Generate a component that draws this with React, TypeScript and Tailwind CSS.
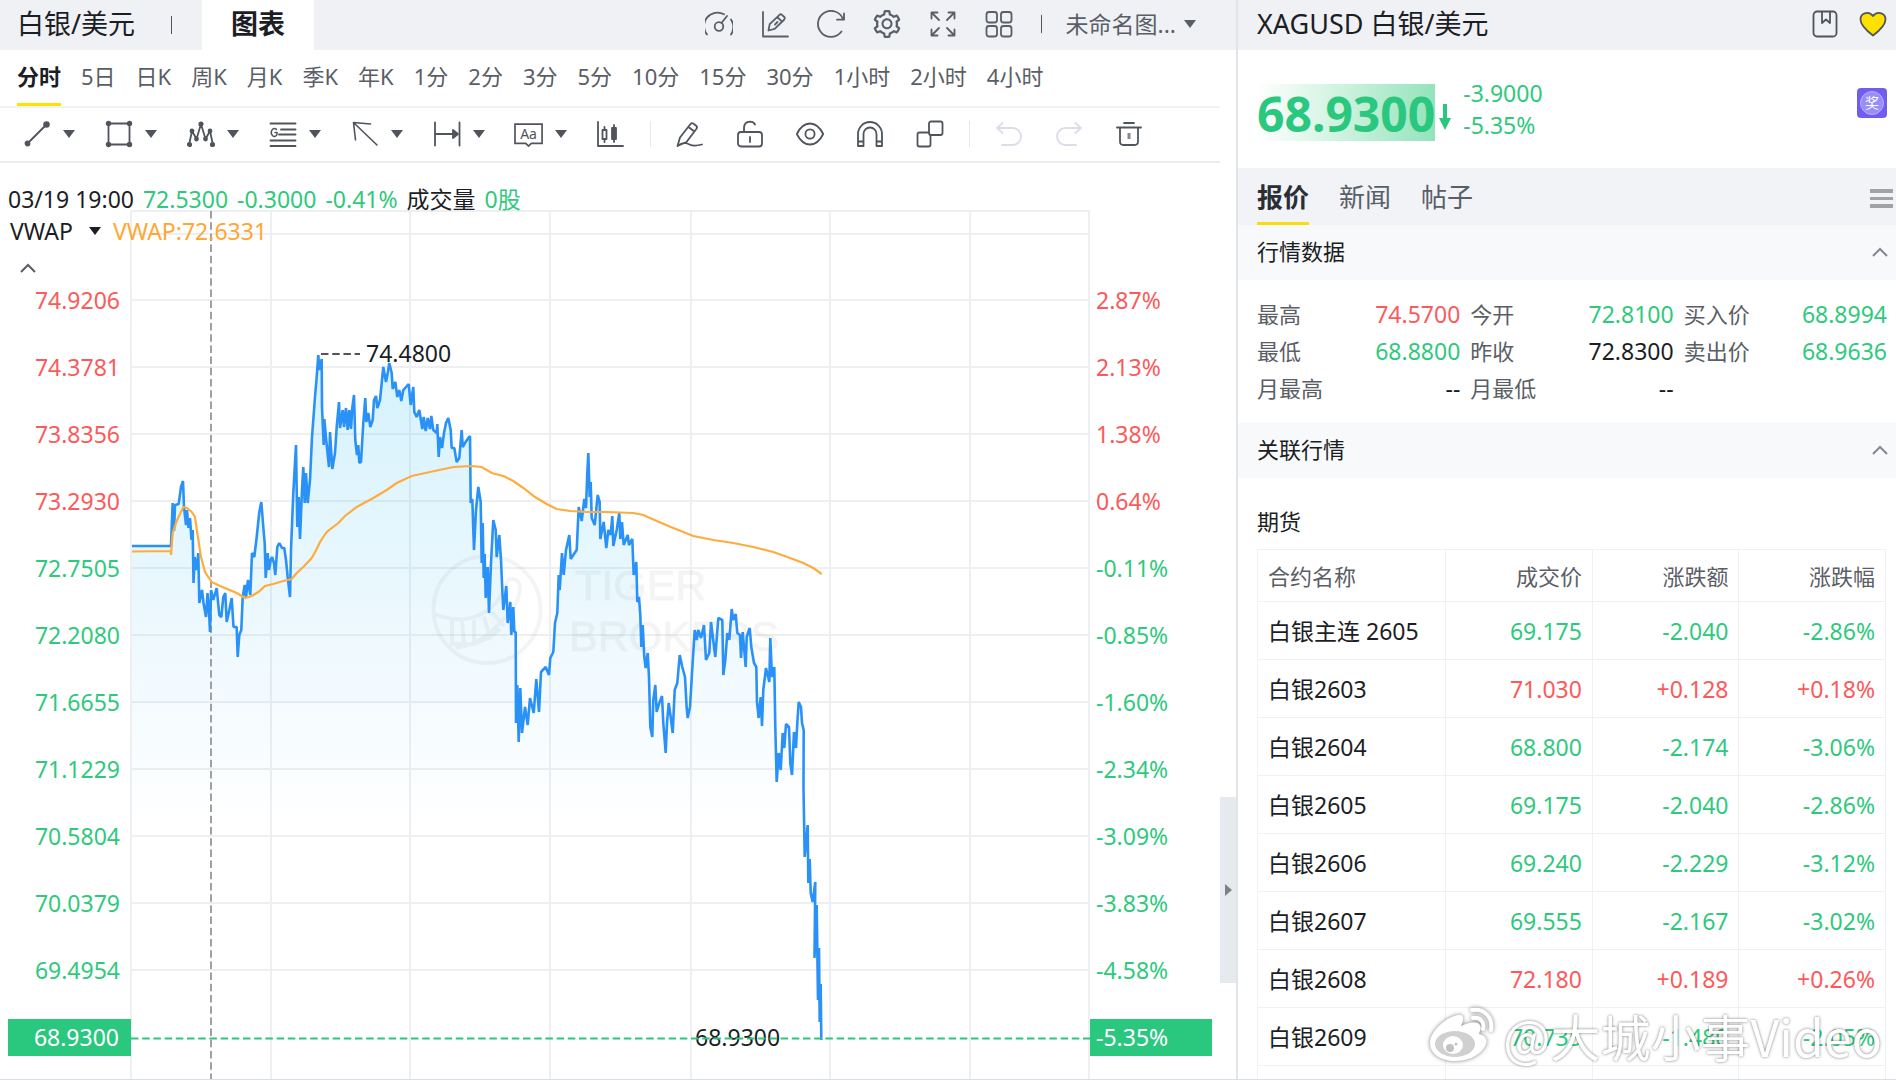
import type { ReactNode } from "react";
import { AiOutlineSetting } from "react-icons/ai";

const UP = "text-[#fc5a5a]";
const DOWN = "text-[#2fc97d]";

const periods = ["分时", "5日", "日K", "周K", "月K", "季K", "年K", "1分", "2分", "3分", "5分", "10分", "15分", "30分", "1小时", "2小时", "4小时"];

const axis = [
    { y: 300, price: "74.9206", pct: "2.87%", up: true },
    { y: 367, price: "74.3781", pct: "2.13%", up: true },
    { y: 434, price: "73.8356", pct: "1.38%", up: true },
    { y: 501, price: "73.2930", pct: "0.64%", up: true },
    { y: 568, price: "72.7505", pct: "-0.11%", up: false },
    { y: 635, price: "72.2080", pct: "-0.85%", up: false },
    { y: 702, price: "71.6655", pct: "-1.60%", up: false },
    { y: 769, price: "71.1229", pct: "-2.34%", up: false },
    { y: 836, price: "70.5804", pct: "-3.09%", up: false },
    { y: 903, price: "70.0379", pct: "-3.83%", up: false },
    { y: 970, price: "69.4954", pct: "-4.58%", up: false },
];

const quotes = [
    { label: "最高", value: "74.5700", color: UP },
    { label: "今开", value: "72.8100", color: DOWN },
    { label: "买入价", value: "68.8994", color: DOWN },
    { label: "最低", value: "68.8800", color: DOWN },
    { label: "昨收", value: "72.8300", color: "text-[#1b1e24]" },
    { label: "卖出价", value: "68.9636", color: DOWN },
    { label: "月最高", value: "--", color: "text-[#1b1e24]" },
    { label: "月最低", value: "--", color: "text-[#1b1e24]" },
];

const futures = [
    { name: "白银主连 2605", price: "69.175", change: "-2.040", pct: "-2.86%" },
    { name: "白银2603", price: "71.030", change: "+0.128", pct: "+0.18%" },
    { name: "白银2604", price: "68.800", change: "-2.174", pct: "-3.06%" },
    { name: "白银2605", price: "69.175", change: "-2.040", pct: "-2.86%" },
    { name: "白银2606", price: "69.240", change: "-2.229", pct: "-3.12%" },
    { name: "白银2607", price: "69.555", change: "-2.167", pct: "-3.02%" },
    { name: "白银2608", price: "72.180", change: "+0.189", pct: "+0.26%" },
    { name: "白银2609", price: "70.735", change: "-1.480", pct: "-2.05%" },
];

const priceLine =
    "132,546 171,546 171.7,527 172.7,503 174,531 175,505 178.7,504 181,487 183,481 184,507 186,525 187,510 188.5,528 190,518 191.5,540 192.7,530 193.5,583 194.7,557 196.7,570 198.3,553 199.3,603 202,590 203.5,603 206,617 207.5,593 209.3,617 210,632 211,590 213.3,600 216.7,588 219.3,615 221.3,617 223.3,597 225.3,593 226.7,622 229.3,610 231.7,598 233.5,627 236.7,627 237.7,657 239.3,635 241.3,630 242.7,597 244.7,585 246,597 248,580 250.3,595 252,553 254.3,557 256.7,537 259.3,512 261.3,502 263.3,527 264.7,543 265.7,578 267.7,553 269,570 270.7,560 272,557 274,563 275.3,575 277.3,547 279.3,543 282,548 284.3,548 286,560 287.7,577 290,597 291,550 293.3,493 296,445 297.3,527 298.7,497 300,539 302,490 303.3,467 304.7,503 306,473 307.7,503 310,480 312,437 315,397 316.7,377 318.3,355 319.3,370 321.7,359 322,407 323.7,445 324.3,419 326.7,445 329,467 330,432 332.3,469 335,453 336.7,427 339,402 340,428 342.7,410 344,427 346,408 347.7,430 349.3,410 351,429 352.3,408 354,395 355.3,440 357,455 358.3,445 359.3,463 361,462 363.3,423 365.3,398 366.3,422 368.3,413 370.3,427 372.7,420 374,400 376,396 377.3,408 380,400 382,380 383.3,367 386,382 387.7,373 389.3,363 391.7,373 392.7,389 395.3,382 397.3,397 399.3,390 401.3,401 403.3,390 406,387 408.7,384 410.7,405 413.3,387 414.3,412 416.7,417 419.3,410 422.3,429 423.7,417 425.7,431 427.7,418 430,429 431.3,416 433.3,430 436.7,433 437.3,424 438.7,457 440,437 442,448 444,433 446,423 448.3,418 450.7,430 451.7,448 454.3,448 456.7,462 459.3,458 461.7,430 462.7,447 465,443 468.3,438 470,436 470.7,503 472.3,499 474,550 476,510 478.3,487 480.7,502 481.7,563 482.7,523 483.7,578 484.7,554 485.7,598 487.7,567 489,613 491,563 493.3,520 495.7,530 496.7,557 499.3,535 501,560 502.3,590 503.3,610 506.3,586 507.7,623 510.3,602 511.3,635 513.3,607 514.3,632 515.7,632 516,723 517.3,685 518.7,742 520.3,688 522,733 525,707 527.7,725 530,698 533.7,713 536.3,679 539,712 541,672 545.7,667 549,675 550.3,658 553.3,652 555,623 557.3,613 558.7,575 559.7,590 562,553 563.7,575 566,550 569.3,535 570.7,559 573.3,555 576.7,550 578.7,507 581.7,521 584.3,499 586,508 587.3,473 588.3,453 589.7,497 590.7,482 591.7,518 594.7,525 597.7,495 599.7,502 600.3,539 603.7,522 606.3,548 608.3,530 610.7,535 612.3,516 613.3,546 616.7,530 619.3,513 620.3,539 622,522 623.7,545 627.7,535 629,545 632.3,539 633.7,575 636.3,562 637.3,602 639,597 640.3,615 641.3,647 642.7,625 644.3,657 645.7,668 647.7,653 649,677 650.3,727 652.3,737 653.3,700 655.3,685 656.7,712 659.3,703 662,696 663.3,723 665.7,753 667,723 668.7,703 670.7,717 672.7,733 674.7,690 677.3,683 679.7,655 682.3,667 685,677 686.7,708 687.7,718 690,707 692,673 694.7,630 696.7,640 698.3,630 701,638 704,625 706,660 709.3,653 711,622 715.3,657 718.3,618 722.3,620 723.3,675 725.3,660 727.3,633 729.3,640 731.7,609 733.3,620 735.7,614 737.3,633 740,635 741,658 742.7,632 745.7,667 746.7,637 749.7,628 751.3,647 754,663 756.3,667 757,702 758.7,718 760.7,697 762,726 763.3,690 766,668 769.3,682 770.3,638 772,677 774.3,667 775.3,727 776.7,782 778.7,753 780.7,770 782.7,733 784.3,748 786,724 789,727 790.3,763 792,775 794,732 796,748 797.3,723 798.7,702 801,707 802,723 803.7,730 803.5,788 804.7,857 807.7,825 808.3,883 809.7,859 810.7,893 812.7,902 815.3,882 814.5,958 816.7,905 818,1000 819,948 819.7,1022 820.7,984 821.3,1040";

const vwapLine =
    "132,551.5 171,551 171,555 172.7,533 176.7,521 183.3,507 187,508 191.7,512 195,517 197.3,533 201,557 205,572 211.7,582 220,586 236.7,593 245,598 251.7,596 258.3,592 265,586 273.3,584 283.3,581 291.7,579 296.7,573 303.3,567 311.7,558 316.7,549 320,542 326.7,532 338.3,523 345,516 356.7,507 373.3,498 386.7,490 396.7,483 411.7,476 430,472 453.3,467 471.7,466 481.7,467 491.7,473 503.3,476 513.3,481 523.3,488 535,497 546.7,504 556.7,509 570,511 586.7,512 606.7,512 633.3,513 643.3,515 656.7,521 673.3,528 693.3,536 713.3,540 733.3,543 753.3,547 773.3,552 790,558 803.3,563 813.3,568 821.7,574";

function Icon({ children, className = "" }: { children: ReactNode; className?: string }) {
    return (
        <svg
            viewBox="0 0 28 28"
            className={`size-7 shrink-0 ${className}`}
            fill="none"
            stroke="currentColor"
            strokeWidth="1.8"
            strokeLinecap="round"
            strokeLinejoin="round"
        >
            {children}
        </svg>
    );
}

function Caret() {
    return (
        <svg viewBox="0 0 12 8" className="h-2 w-3 shrink-0" fill="currentColor">
            <path d="M0 0h12L6 8z" />
        </svg>
    );
}

function Chevron() {
    return (
        <svg viewBox="0 0 16 10" className="h-[10px] w-4" fill="none" stroke="currentColor" strokeWidth="2">
            <path d="M1 9l7-7 7 7" />
        </svg>
    );
}

/* Top bar icons, left to right */
const topIcons = [
    {
        name: "仪表",
        icon: (
            <Icon>
                <path d="M2 24.5A13.5 13.5 0 0 1 19 4.2M26 9.5a14 14 0 0 1 0 15M16.5 13l5.5-7" />
                <circle cx="14" cy="16.5" r="4.3" />
            </Icon>
        ),
    },
    {
        name: "画图",
        icon: (
            <Icon>
                <path d="M2 2v24.5h25M7.5 20.5l1.2-6.3L18.5 4.8q1.2-1 2.5 0l2.3 2.2q1.2 1.2 0 2.5l-9.6 9.3zM16.2 7l4.8 4.6M14 14.5l2.5-2.5" />
            </Icon>
        ),
    },
    {
        name: "刷新",
        icon: (
            <Icon>
                <path d="M24.5 21.5A13 13 0 1 1 26 9M27 3.5V9.7h-7" />
            </Icon>
        ),
    },
    { name: "设置", icon: <AiOutlineSetting className="-mx-[2px] size-8" /> },
    {
        name: "全屏",
        icon: (
            <Icon>
                <path d="M10 10L2.5 2.5M2.5 8.5v-6h6M18 10l7.5-7.5M19.5 2.5h6v6M10 18l-7.5 7.5M2.5 19.5v6h6M18 18l7.5 7.5M25.5 19.5v6h-6" />
            </Icon>
        ),
    },
    {
        name: "布局",
        icon: (
            <Icon>
                <rect x="1.5" y="2" width="10.5" height="10.5" rx="2.5" />
                <rect x="16" y="2" width="10.5" height="10.5" rx="2.5" />
                <rect x="1.5" y="16" width="10.5" height="10.5" rx="2.5" />
                <rect x="16" y="16" width="10.5" height="10.5" rx="2.5" />
            </Icon>
        ),
    },
];

const drawTools = [
    {
        name: "线段",
        icon: (
            <Icon>
                <path d="M4 24L24 4" />
                <circle cx="4.5" cy="23.5" r="2" fill="currentColor" />
                <circle cx="23.5" cy="4.5" r="2.4" fill="currentColor" />
            </Icon>
        ),
    },
    {
        name: "矩形",
        icon: (
            <Icon>
                <path d="M3.5 3.5h21v21h-21z" />
                <g fill="currentColor">
                    <circle cx="3.5" cy="3.5" r="1.8" />
                    <circle cx="24.5" cy="3.5" r="1.8" />
                    <circle cx="3.5" cy="24.5" r="1.8" />
                    <circle cx="24.5" cy="24.5" r="1.8" />
                </g>
            </Icon>
        ),
    },
    {
        name: "形态",
        icon: (
            <Icon>
                <path d="M2 25L5 11l4.5 8L14 4l4.5 15L23 11l3 14" />
                <g fill="currentColor">
                    <circle cx="2.5" cy="24.5" r="1.7" />
                    <circle cx="5" cy="11" r="1.5" />
                    <circle cx="9.5" cy="19" r="1.5" />
                    <circle cx="14" cy="4" r="1.7" />
                    <circle cx="18.5" cy="19" r="1.5" />
                    <circle cx="23" cy="11" r="1.5" />
                    <circle cx="25.5" cy="24.5" r="1.7" />
                </g>
            </Icon>
        ),
    },
    {
        name: "江恩",
        icon: (
            <Icon>
                <path d="M1.5 3.5h25M12 9.500h14.5M10 14.5h16.5M1.5 20.5h25M1.5 26h25" />
                <path d="M7.5 9.5a3 4 0 1 0 .5 5v-2H6" strokeWidth="1.5" />
            </Icon>
        ),
    },
    {
        name: "箭头",
        icon: (
            <Icon>
                <path d="M26 25L3 3M4.5 20L2.500 2.500l17 1.500" strokeWidth="1.6" />
            </Icon>
        ),
    },
    {
        name: "测量",
        icon: (
            <Icon>
                <path d="M2 2.5v23M26.5 2.5v23M2 14h22" />
                <path d="M20 10l5 4-5 4z" fill="currentColor" />
            </Icon>
        ),
    },
    {
        name: "文字",
        icon: (
            <svg viewBox="0 0 30 28" className="size-7 shrink-0 overflow-visible" fill="none" stroke="currentColor" strokeWidth="1.8">
                <path d="M0 3.5h29V24H17.5l-3 3-3-3H0z" />
                <text x="14.5" y="19.5" textAnchor="middle" fontSize="15" fill="currentColor" stroke="none">
                    Aa
                </text>
            </svg>
        ),
    },
];

const editTools = [
    {
        name: "画笔",
        icon: (
            <Icon>
                <path d="M1.500 26L4 17.5 14.5 4q1.3-1.5 3-.3l2.7 2q1.5 1.3.3 3L10.5 22zM12.5 7l5.5 4.3M1.5 26c6-5 9-3 12-1.5s7 1.5 12.5 0" />
            </Icon>
        ),
    },
    {
        name: "锁定",
        icon: (
            <Icon>
                <rect x="2" y="12" width="24" height="14.5" rx="3" />
                <path d="M8 12V8q0-6 6-6.3 3.5 0 5 2.8M14 17v5" />
            </Icon>
        ),
    },
    {
        name: "显示",
        icon: (
            <Icon>
                <path d="M.8 14Q6 3.5 14 3.5T27.2 14Q22 24.5 14 24.5T.8 14z" />
                <circle cx="14" cy="14" r="4.6" />
            </Icon>
        ),
    },
    {
        name: "磁铁",
        icon: (
            <Icon>
                <path d="M2 26V14a12 12 0 0 1 24 0v12h-5.5V14a6.5 6.5 0 0 0-13 0v12zM2 21.5h5.5M20.5 21.5H26" />
            </Icon>
        ),
    },
    {
        name: "联动",
        icon: (
            <Icon>
                <rect x="13" y="1.5" width="13.5" height="13.5" rx="2" />
                <path d="M13 12.5H3.5q-2 0-2 2v10q0 2 2 2h9q2 0 2-2V15" />
            </Icon>
        ),
    },
];

const historyTools = [
    {
        name: "撤销",
        icon: (
            <Icon className="text-[#dcdcea]">
                <path d="M7.5 3L2 8l5.5 5M2 8h15.5a8.5 8.5 0 0 1 0 17H7" />
            </Icon>
        ),
    },
    {
        name: "重做",
        icon: (
            <Icon className="text-[#dcdcea]">
                <path d="M20.5 3L26 8l-5.5 5M26 8H10.5a8.5 8.5 0 0 0 0 17H21" />
            </Icon>
        ),
    },
    {
        name: "删除",
        icon: (
            <Icon>
                <path d="M9 3h10M2 7.5h24M5 7.5v14Q5 25 8.500 25h11q3.500 0 3.500-3.500v-14" />
                <path d="M14 13v6" strokeWidth="3" stroke="#85888f" strokeLinecap="butt" />
            </Icon>
        ),
    },
];

function ToolButton({ name, icon }: { name: string; icon: ReactNode }) {
    return (
        <button type="button" aria-label={name} className="shrink-0">
            {icon}
        </button>
    );
}

function PriceChart() {
    return (
        <svg viewBox="0 163 1220 916" className="block w-full text-[23px]">
            <defs>
                <linearGradient id="area" gradientUnits="userSpaceOnUse" x1="0" y1="350" x2="0" y2="825">
                    <stop offset="0" stopColor="#1cbcf2" stopOpacity="0.19" />
                    <stop offset="1" stopColor="#1ca6f2" stopOpacity="0" />
                </linearGradient>
            </defs>

            <g stroke="#eeeff1" strokeWidth="2">
                <path d="M131 211H1089V1079M131 211V1079M131 234H1089" fill="none" />
                {axis.map((a) => (
                    <path key={a.y} d={`M131 ${a.y}H1089`} />
                ))}
                {[271, 410, 550, 691, 830, 970].map((x) => (
                    <path key={x} d={`M${x} 211V1079`} />
                ))}
            </g>

            {/* Broker logo behind the line */}
            <g fill="#1b1e24" opacity="0.045" fontFamily="Liberation Sans, sans-serif" fontSize="43">
                <g fill="none" stroke="#1b1e24" strokeWidth="4">
                    <circle cx="487" cy="609.5" r="53.5" />
                    <path d="M435 614c22 10 44 5 58-8s10-28 20-27 10 18-4 34-28 32-54 35M452 620v24h16M462 620l2 24M474 620v24l14-6M484 617l6 20 10-8M492 612l12 14" />
                </g>
                <g stroke="#1b1e24" strokeWidth="1">
                    <text x="575" y="600">TIGER</text>
                    <text x="569" y="651">BROKERS</text>
                </g>
            </g>

            <polygon points={`${priceLine} 821,1079 132,1079`} fill="url(#area)" />
            <path d="M211 211V1079" stroke="#a0a0a0" strokeWidth="2" strokeDasharray="7.5 3.7" />
            <polyline points={priceLine} fill="none" stroke="#2a91f6" strokeWidth="2.6" strokeLinejoin="bevel" />
            <polyline points={vwapLine} fill="none" stroke="#ffab3d" strokeWidth="2.2" />

            <path d="M321 354H360" stroke="#1b1e24" strokeWidth="1.6" strokeDasharray="7.5 3.7" />
            <text x="366" y="362" fill="#1b1e24">74.4800</text>
            <text x="695" y="1046" fill="#1b1e24">68.9300</text>
            <path d="M131 1038.5H1090" stroke="#2ac77f" strokeWidth="2" strokeDasharray="7.5 3.7" />

            {axis.map((a) => (
                <g key={a.price} fill={a.up ? "#fc5a5a" : "#2fc97d"}>
                    <text x="120" y={a.y + 9} textAnchor="end">{a.price}</text>
                    <text x="1096" y={a.y + 9}>{a.pct}</text>
                </g>
            ))}
            <g fill="#2ac77f">
                <rect x="8" y="1019" width="123" height="37" />
                <rect x="1090" y="1019" width="122" height="37" />
            </g>
            <g fill="#fff">
                <text x="119" y="1046" textAnchor="end">68.9300</text>
                <text x="1096" y="1046">-5.35%</text>
            </g>
        </svg>
    );
}

function SectionTitle({ title }: { title: string }) {
    return (
        <div className="flex h-[55px] items-center justify-between bg-[#f8f9fb] pr-2 pb-[2px] pl-[19px]">
            <h2 className="text-[22px] text-[#1b1e24]">{title}</h2>
            <button type="button" aria-label={`收起${title}`} className="text-[#85888f]">
                <Chevron />
            </button>
        </div>
    );
}

function FuturesTable() {
    return (
        <table className="w-full table-fixed border-collapse text-right text-[23px] leading-8 [&_td]:border [&_td]:border-[#eef1f6] [&_td]:px-[10px] [&_th]:border [&_th]:border-[#eef1f6] [&_th]:px-[10px] [&_th]:font-normal">
            <thead>
                <tr className="h-[52px] text-[22px] text-[#5a5e66]">
                    <th className="w-[30%] text-left">合约名称</th>
                    <th>成交价</th>
                    <th>涨跌额</th>
                    <th>涨跌幅</th>
                </tr>
            </thead>
            <tbody>
                {futures.map((f) => {
                    const color = f.change.startsWith("+") ? UP : DOWN;
                    return (
                        <tr key={f.name} className={`h-[58px] ${color}`}>
                            <td className="text-left text-[#1b1e24]">{f.name}</td>
                            <td>{f.price}</td>
                            <td>{f.change}</td>
                            <td>{f.pct}</td>
                        </tr>
                    );
                })}
                <tr className="h-[58px]">
                    <td />
                    <td />
                    <td />
                    <td />
                </tr>
            </tbody>
        </table>
    );
}

export default function App() {
    return (
        <div className="relative flex h-screen overflow-hidden border-b border-[#dcdde0] bg-white font-['Noto_Sans','Noto_Sans_CJK_SC',sans-serif] text-[22px] text-[#1b1e24]">
            <main className="min-w-0 flex-1">
                <header className="flex h-[50px] items-center bg-[#eff1f5] pr-10 text-[27px]">
                    <a href="#quote" className="pb-[2px] pl-[17px]">白银/美元</a>
                    <span className="ml-9 h-[18px] w-px bg-[#50545c]" />
                    <a href="#chart" className="ml-[30px] flex h-full items-center bg-white px-[29px] pb-[2px] font-bold">图表</a>
                    <div className="ml-auto flex items-center gap-7 pb-[2px] text-[#5a5e66]">
                        {topIcons.map((t) => (
                            <ToolButton key={t.name} name={t.name} icon={t.icon} />
                        ))}
                        <span className="h-[18px] w-px bg-[#50545c]" />
                        <button type="button" className="-ml-1 flex items-center gap-2 text-[23px]">
                            未命名图...
                            <Caret />
                        </button>
                    </div>
                </header>

                <div className="flex">
                    <div className="min-w-0 flex-1">
                        <nav className="flex h-[58px] gap-5 border-b-2 border-[#f1f2f4] pl-[17px] text-[#5a5e66]">
                            {periods.map((p, i) => (
                                <button
                                    key={p}
                                    type="button"
                                    className={i === 0 ? "shrink-0 border-b-3 border-[#ffe100] font-bold text-[#1b1e24]" : "shrink-0 border-b-3 border-transparent"}
                                >
                                    {p}
                                </button>
                            ))}
                        </nav>

                        <div className="flex h-[55px] items-center border-b-2 border-[#ebecee] pb-[2px] pl-[23px] text-[#50545c]">
                            <div className="flex gap-[30px]">
                                {drawTools.map((t) => (
                                    <button key={t.name} type="button" aria-label={t.name} className="flex shrink-0 items-center gap-3">
                                        {t.icon}
                                        <Caret />
                                    </button>
                                ))}
                                <button type="button" aria-label="K线">
                                    <Icon>
                                        <path d="M1 2v24h25M7.5 7v3M7.5 19v3M17 5v17" />
                                        <rect x="5.5" y="10" width="4" height="9" />
                                        <rect x="15" y="8" width="4" height="11" fill="currentColor" />
                                    </Icon>
                                </button>
                            </div>
                            <span className="mx-[25px] h-[26px] w-px bg-[#e6e7ea]" />
                            <div className="flex gap-8">
                                {editTools.map((t) => (
                                    <ToolButton key={t.name} name={t.name} icon={t.icon} />
                                ))}
                            </div>
                            <span className="mx-[25px] h-[26px] w-px bg-[#e6e7ea]" />
                            <div className="flex gap-8">
                                {historyTools.map((t) => (
                                    <ToolButton key={t.name} name={t.name} icon={t.icon} />
                                ))}
                            </div>
                        </div>

                        <div className="relative">
                            <PriceChart />
                            {/* Legend sits over the chart */}
                            <div className="absolute top-5 left-2 text-[23px] leading-8">
                                <p className="flex gap-[9px]">
                                    <span>03/19 19:00</span>
                                    <span className={DOWN}>72.5300</span>
                                    <span className={DOWN}>-0.3000</span>
                                    <span className={DOWN}>-0.41%</span>
                                    <span>成交量</span>
                                    <span className={DOWN}>0股</span>
                                </p>
                                <div className="flex items-center gap-3">
                                    <button type="button" className="flex items-center gap-4 pl-[2px]">
                                        VWAP
                                        <Caret />
                                    </button>
                                    <span className="text-[#ffa733]">VWAP:72.6331</span>
                                </div>
                                <button type="button" aria-label="收起指标" className="flex pt-4 pl-3 text-[#5a5e66]">
                                    <Chevron />
                                </button>
                            </div>
                        </div>
                    </div>

                    {/* Collapse handle */}
                    <div className="flex w-4 shrink-0 flex-col pt-[747px]">
                        <button type="button" aria-label="收起侧栏" className="flex h-[186px] items-center justify-center bg-[#e6eaef] text-[#7b818c]">
                            <svg viewBox="0 0 7 12" className="h-3 w-[7px]" fill="currentColor">
                                <path d="M0 0l7 6-7 6z" />
                            </svg>
                        </button>
                    </div>
                </div>
            </main>

            <aside className="w-[660px] shrink-0 border-l-2 border-[#e1e4e9]">
                <header className="flex h-[50px] items-center bg-[#eff1f5] pr-[9px] pb-[2px] pl-[19px]">
                    <h1 className="text-[27px]">XAGUSD 白银/美元</h1>
                    <div className="ml-auto flex items-center gap-5 text-[#50545c]">
                        <button type="button" aria-label="笔记">
                            <Icon>
                                <rect x="2.5" y="1.5" width="23" height="25" rx="3.5" />
                                <path d="M11 2v11l4-3.5 4 3.5V2" />
                            </Icon>
                        </button>
                        <button type="button" aria-label="自选">
                            <Icon>
                                <path d="M14 25.5C8 21 1.5 14.5 1.5 9.500 1.500 2 10.500 1 14 6c3.500-5 12.500-4 12.500 3.500 0 5-6.500 11.500-12.500 16z" fill="#ffe100" />
                            </Icon>
                        </button>
                    </div>
                </header>

                <div className="flex h-[118px] items-center pr-[9px] pl-[19px]">
                    <div className="mt-[7px] flex h-[57px] items-center bg-linear-to-r from-white to-[#93e3bc] pt-[2px] text-[48px] font-bold text-[#2ac77f]">68.9300</div>
                    <svg viewBox="0 0 12 26" className="mt-4 ml-1 h-[26px] w-3 text-[#2ac77f]" fill="currentColor">
                        <path d="M4 0h4v14h4L6 26 0 14h4z" />
                    </svg>
                    <div className={`ml-3 text-[23px] leading-8 ${DOWN}`}>
                        <p>-3.9000</p>
                        <p>-5.35%</p>
                    </div>
                    <span className="mb-3 ml-auto flex size-[30px] items-center justify-center rounded-sm bg-[#6f5df0] text-white">
                        <span className="flex size-6 items-center justify-center rounded-full border border-[#b9b0ff] bg-[#9a8dfa] text-sm">奖</span>
                    </span>
                </div>

                <nav className="flex h-[57px] gap-[30px] bg-[#f1f3f6] pr-[3px] pl-[19px] text-[26px] text-[#5a5e66]">
                    <button type="button" className="border-b-3 border-[#f9dc0c] pt-1 font-bold text-[#2b2e34]">报价</button>
                    <button type="button" className="border-b-3 border-transparent pt-1">新闻</button>
                    <button type="button" className="border-b-3 border-transparent pt-1">帖子</button>
                    <button type="button" aria-label="菜单" className="ml-auto pt-1 text-[#a0a2a6]">
                        <svg viewBox="0 0 23 20" className="h-5 w-[23px]" fill="currentColor">
                            <path d="M0 0h23v4H0zM0 8h23v3H0zM0 15h23v4H0z" />
                        </svg>
                    </button>
                </nav>

                <SectionTitle title="行情数据" />
                <dl className="grid grid-cols-3 gap-x-[10px] pt-4 pr-[9px] pb-4 pl-[19px] leading-[37px]">
                    {quotes.map((q) => (
                        <div key={q.label} className="flex justify-between">
                            <dt className="text-[#5a5e66]">{q.label}</dt>
                            <dd className={`text-[23px] ${q.color}`}>{q.value}</dd>
                        </div>
                    ))}
                </dl>

                <SectionTitle title="关联行情" />
                <div className="pt-7 pr-[10px] pl-[19px]">
                    <h3 className="pb-[13px] leading-[30px]">期货</h3>
                    <FuturesTable />
                </div>
            </aside>

            {/* Account stamp over the lower right corner */}
            <div className="absolute right-[14px] bottom-4 flex items-center gap-2 text-white">
                <svg viewBox="0 0 66 56" className="h-14 w-[66px] drop-shadow-[0_0_2px_rgba(0,0,0,0.5)]" fill="none">
                    <path d="M30 8c5-1 5 5 2 11 8-4 16-5 19-1 2 4-1 7-1 9 9 2 9 9 5 14-6 9-18 13-29 13C12 54 1 47 1 36 1 24 18 9 30 8z" fill="#fff" />
                    <ellipse cx="26" cy="37" rx="20" ry="13" fill="#d0d0d0" />
                    <ellipse cx="24" cy="38" rx="10" ry="9" fill="#fff" />
                    <circle cx="21" cy="41" r="4" fill="#c2c2c2" />
                    <circle cx="27" cy="37" r="1.5" fill="#c2c2c2" />
                    <path d="M43 3c13-2 21 8 19 20M44 11c7-1 12 4 10 11" stroke="#fff" strokeWidth="4" strokeLinecap="round" />
                </svg>
                <span className="font-['Noto_Sans_CJK_SC',sans-serif] text-[50px] leading-[50px] [text-shadow:0_0_3px_rgba(0,0,0,0.55)]">@大城小事Video</span>
            </div>
        </div>
    );
}
